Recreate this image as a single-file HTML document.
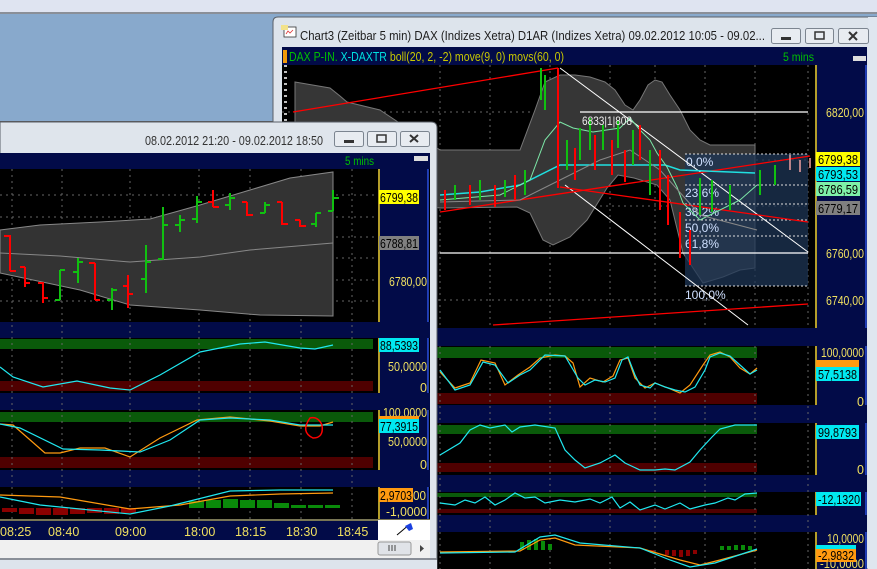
<!DOCTYPE html>
<html><head><meta charset="utf-8"><style>
html,body{margin:0;padding:0;width:877px;height:569px;overflow:hidden;background:#8aaacc}
svg{display:block}
text{font-family:"Liberation Sans",sans-serif}
</style></head><body>
<svg width="877" height="569" viewBox="0 0 877 569" xmlns="http://www.w3.org/2000/svg">
<rect x="0" y="0" width="877" height="13" fill="#dfe4f1"/>
<rect x="0" y="12" width="877" height="2" fill="#8a8f98"/>
<rect x="0" y="14" width="877" height="108" fill="#88a9cc"/>
<rect x="0" y="121" width="877" height="2" fill="#555"/>
<rect x="0" y="123" width="877" height="446" fill="#c3cfdd"/>

<!-- RIGHT WINDOW -->
<path d="M273,569 V22 Q273,17 278,17 H877 V569 Z" fill="#dde4ec" stroke="#5a6068" stroke-width="1"/>
<rect x="868" y="17" width="9" height="552" fill="#dfe6ef"/>
<rect x="284" y="27" width="12" height="10" fill="#fff" stroke="#333" stroke-width="0.8"/>
<path d="M281,25 L288,25 L288,30 L281,30Z" fill="#f2e28a"/>
<path d="M286,34 l2,-3 l2,2 l3,-3" stroke="#d33" fill="none" stroke-width="0.8"/>
<text x="300" y="40" font-size="12.5" fill="#1e1e1e" textLength="465" lengthAdjust="spacingAndGlyphs">Chart3 (Zeitbar 5 min)  DAX (Indizes Xetra) D1AR (Indizes Xetra) 09.02.2012 10:05 - 09.02...</text>
<g fill="#e8ecf1" stroke="#7c8590">
<rect x="771.5" y="28.5" width="29" height="15" rx="2"/>
<rect x="805.5" y="28.5" width="28" height="15" rx="2"/>
<rect x="838.5" y="28.5" width="30" height="15" rx="2"/>
</g>
<rect x="781" y="37" width="10" height="3" fill="#333"/>
<rect x="815" y="32" width="9" height="7" fill="none" stroke="#333" stroke-width="1.5"/>
<path d="M849,32 l8,8 M857,32 l-8,8" stroke="#333" stroke-width="2"/>

<rect x="282" y="47" width="585" height="522" fill="#000"/>
<rect x="282" y="47" width="585" height="18" fill="#020b48"/>
<rect x="283" y="50" width="4" height="13" fill="#f39a0a"/>
<text x="289" y="61" font-size="12.5" textLength="275" lengthAdjust="spacingAndGlyphs"><tspan fill="#00c000">DAX P-IN.</tspan><tspan fill="#00e0e0"> X-DAXTR</tspan><tspan fill="#c8c800"> boll(20, 2, -2) move(9, 0) movs(60, 0)</tspan></text>
<text x="783" y="61" font-size="12" fill="#00c000" textLength="31" lengthAdjust="spacingAndGlyphs">5 mins</text>
<rect x="853" y="56" width="13" height="5" fill="#ddd"/>
<rect x="282" y="328" width="585" height="18" fill="#020b48"/>
<rect x="282" y="405" width="585" height="18" fill="#020b48"/>
<rect x="282" y="475" width="585" height="17" fill="#020b48"/>
<rect x="282" y="515" width="585" height="17" fill="#020b48"/>
<rect x="282" y="347" width="475" height="11" fill="#0a5a0a"/>
<rect x="282" y="393" width="475" height="11" fill="#4f0000"/>
<rect x="282" y="425" width="475" height="9" fill="#0a5a0a"/>
<rect x="282" y="463" width="475" height="9" fill="#4f0000"/>
<rect x="282" y="493" width="475" height="4" fill="#0a5a0a"/>
<rect x="282" y="509" width="475" height="4" fill="#4f0000"/>
<g stroke="#666" stroke-dasharray="2,4" stroke-width="1">
<path d="M440,65V328 M490,65V328 M550,65V328 M610,65V328 M655,65V328 M705,65V328 M755,65V328 M808,65V328"/>
<path d="M282,112H808 M282,160H808 M282,206H808 M282,253H808 M282,300H808"/>
<path d="M440,346V569 M490,346V569 M550,346V569 M610,346V569 M655,346V569 M705,346V569 M755,346V569 M808,346V569"/>
</g>
<g stroke="#fff" stroke-width="1.5"><path d="M284,66h3M284,72h3M284,78h3M284,84h3M284,90h3M284,96h3M284,102h3M284,108h3M284,114h3M284,120h3"/></g>
<path d="M295,82 L330,88 L340,96 L347,102 L380,110 L440,150 L480,150 L520,150 L535,110 L545,82 L560,75 L575,75 L590,77 L605,82 L615,90 L625,105 L633,110 L640,100 L648,85 L655,80 L662,82 L670,95 L680,110 L690,130 L700,140 L710,145 L755,145 L755,268 L740,270 L723,277 L703,283 L683,253 L670,200 L657,185 L634,178 L618,175 L607,188 L587,220 L570,237 L553,245 L543,240 L530,213 L517,207 L440,208 L380,200 L295,200 Z" fill="#363636" stroke="#777" stroke-width="1"/>
<rect x="685" y="154" width="123" height="132" fill="#1d3556" fill-opacity="0.75"/>
<g stroke="#ddd" stroke-dasharray="2,2"><path d="M685,154H808 M685,185H808 M685,204H808 M685,220H808 M685,236H808 M685,286H808"/></g>
<g font-size="12" fill="#cfe0ff">
<text x="686" y="166">0,0%</text><text x="685" y="197">23,6%</text><text x="685" y="216">38,2%</text><text x="685" y="232">50,0%</text><text x="685" y="248">61,8%</text><text x="685" y="299">100,0%</text>
</g>
<path d="M580,112H808 M440,253H808" stroke="#fff" stroke-width="1.3"/>
<path d="M560,68 L808,252 M565,185 L748,325" stroke="#fff" stroke-width="1"/>
<g stroke="#f00" stroke-width="1.3" fill="none">
<path d="M293,112 L558,68"/>
<path d="M440,212 L810,156"/>
<path d="M560,187 L808,222"/>
<path d="M493,325 L808,304"/>
</g>
<path d="M440,195 L480,192 L520,185 L560,165 L665,165 L680,170 L755,173" stroke="#20e0e0" fill="none" stroke-width="1.5"/>
<path d="M440,200 L500,195 L530,180 L545,140 L560,122 L573,128 L593,132 L620,128 L630,118 L640,130 L650,140 L657,153 L667,167 L677,187 L683,203 L700,220 L740,200 L757,185" stroke="#7de8a8" fill="none" stroke-width="1"/>
<path d="M440,202 L520,200 L560,180 L600,160 L630,150 L660,170 L700,215 L757,230" stroke="#888" fill="none" stroke-width="1"/>
<g stroke-width="2" fill="none">
<g stroke="#10c010">
<path d="M541,68V100 M545,75V110 M567,140V170 M580,128V160 M590,118V150 M603,125V150 M618,120V148 M633,130V165 M650,150V195 M700,178V215 M712,180V212 M730,185V210 M760,170V195 M775,165V185 M455,185V200 M480,180V200 M505,180V197 M525,170V195"/>
</g>
<g stroke="#f00">
<path d="M558,68V188 M575,148V180 M595,135V170 M612,140V175 M625,150V182 M640,125V160 M660,150V210 M668,175V225 M680,212V258 M690,230V265 M445,190V210 M470,185V205 M495,185V207 M515,175V200"/>
</g>
<g stroke="#f0a0a0" stroke-width="1.5"><path d="M790,155V170 M800,160V172 M810,158V168"/></g>
</g>
<text x="582" y="125" font-size="12" fill="#eee" textLength="50" lengthAdjust="spacingAndGlyphs">6833|1|808</text>
<path d="M440,372 L455,388 L470,383 L481,360 L495,363 L505,385 L518,375 L530,367 L540,358 L555,355 L565,356 L573,363 L580,387 L590,378 L603,382 L613,376 L620,360 L628,358 L635,378 L645,388 L655,383 L668,388 L680,393 L690,385 L703,365 L710,355 L720,352 L730,357 L740,368 L750,374 L757,368" stroke="#ff9a10" fill="none" stroke-width="1.2"/>
<path d="M440,370 L455,390 L470,385 L483,362 L495,365 L508,383 L520,375 L530,370 L540,360 L545,355 L565,356 L578,378 L585,385 L595,380 L605,382 L615,378 L622,360 L628,357 L635,375 L640,385 L650,388 L655,383 L665,387 L675,390 L685,392 L695,387 L705,370 L710,357 L720,353 L730,356 L740,365 L750,374 L757,370" stroke="#20e8f0" fill="none" stroke-width="1.2"/>
<path d="M440,455 L460,443 L470,430 L480,425 L490,428 L505,425 L512,432 L520,427 L535,425 L555,428 L565,450 L575,460 L585,468 L600,463 L615,455 L625,463 L640,470 L655,470 L665,469 L675,470 L690,462 L700,450 L712,437 L720,429 L735,425 L757,425" stroke="#20e8f0" fill="none" stroke-width="1.2"/>
<path d="M440,503 L455,505 L465,500 L475,503 L485,497 L495,505 L505,500 L515,493 L525,498 L535,497 L545,503 L560,500 L575,502 L590,499 L600,503 L612,497 L620,508 L630,502 L640,510 L655,505 L665,509 L680,503 L690,509 L705,505 L715,503 L728,498 L735,500 L745,494 L757,493" stroke="#20e8f0" fill="none" stroke-width="1.2"/>
<g fill="#0a8a0a"><rect x="520" y="542" width="4" height="8"/><rect x="527" y="540" width="4" height="10"/><rect x="534" y="539" width="4" height="11"/><rect x="541" y="541" width="4" height="9"/><rect x="548" y="544" width="4" height="6"/><rect x="720" y="546" width="4" height="4"/><rect x="727" y="546" width="4" height="4"/><rect x="734" y="545" width="4" height="5"/><rect x="741" y="545" width="4" height="5"/><rect x="748" y="546" width="4" height="4"/></g>
<g fill="#8a0000"><rect x="650" y="550" width="4" height="3"/><rect x="665" y="550" width="4" height="5"/><rect x="672" y="550" width="4" height="6"/><rect x="679" y="550" width="4" height="7"/><rect x="686" y="550" width="4" height="6"/><rect x="693" y="550" width="4" height="4"/></g>
<path d="M440,552 L520,551 L540,540 L555,538 L575,545 L640,548 L680,560 L700,565 L720,560 L757,550" stroke="#ff9a10" fill="none" stroke-width="1.2"/>
<path d="M440,553 L515,552 L540,537 L555,535 L580,543 L640,548 L670,560 L690,567 L715,563 L757,549" stroke="#20e8f0" fill="none" stroke-width="1.2"/>

<rect x="815" y="65" width="51" height="263" fill="#020b48"/>
<rect x="815" y="346" width="51" height="59" fill="#020b48"/>
<rect x="815" y="423" width="51" height="52" fill="#020b48"/>
<rect x="815" y="492" width="51" height="23" fill="#020b48"/>
<rect x="815" y="532" width="51" height="37" fill="#020b48"/>
<g stroke="#f0d020" stroke-width="1.5"><path d="M816,65V328 M816,346V405 M816,423V475 M816,492V515 M816,532V569"/></g>
<g stroke="#2a50e0" stroke-width="1.5"><path d="M866,65V328 M866,346V405 M866,423V475 M866,492V515 M866,532V569"/></g>
<g font-size="12.5" fill="#f0e060" lengthAdjust="spacingAndGlyphs">
<text x="826" y="117" textLength="38" lengthAdjust="spacingAndGlyphs">6820,00</text>
<text x="826" y="258" textLength="38" lengthAdjust="spacingAndGlyphs">6760,00</text>
<text x="826" y="305" textLength="38" lengthAdjust="spacingAndGlyphs">6740,00</text>
<text x="821" y="357" textLength="43" lengthAdjust="spacingAndGlyphs">100,0000</text>
<text x="857" y="406">0</text><text x="857" y="474">0</text>
<text x="827" y="543" textLength="37" lengthAdjust="spacingAndGlyphs">10,0000</text>
<text x="820" y="568" textLength="44" lengthAdjust="spacingAndGlyphs">-10,0000</text>
</g>
<rect x="816" y="152" width="44" height="14" fill="#ffff00"/><text x="818" y="164" font-size="12.5" fill="#000" textLength="40" lengthAdjust="spacingAndGlyphs">6799,38</text>
<rect x="816" y="167" width="44" height="14" fill="#00e8f0"/><text x="818" y="179" font-size="12.5" fill="#000" textLength="40" lengthAdjust="spacingAndGlyphs">6793,53</text>
<rect x="816" y="182" width="44" height="14" fill="#7ef0a8"/><text x="818" y="194" font-size="12.5" fill="#000" textLength="40" lengthAdjust="spacingAndGlyphs">6786,59</text>
<rect x="816" y="201" width="44" height="14" fill="#808080"/><text x="818" y="213" font-size="12.5" fill="#000" textLength="40" lengthAdjust="spacingAndGlyphs">6779,17</text>
<rect x="816" y="360" width="43" height="8" fill="#ff9a10"/>
<rect x="816" y="367" width="43" height="14" fill="#00e8f0"/><text x="818" y="379" font-size="12.5" fill="#000" textLength="39" lengthAdjust="spacingAndGlyphs">57,5138</text>
<rect x="816" y="425" width="43" height="14" fill="#00e8f0"/><text x="818" y="437" font-size="12.5" fill="#000" textLength="39" lengthAdjust="spacingAndGlyphs">99,8793</text>
<rect x="816" y="492" width="45" height="14" fill="#00e8f0"/><text x="818" y="504" font-size="12.5" fill="#000" textLength="42" lengthAdjust="spacingAndGlyphs">-12,1320</text>
<rect x="816" y="545" width="40" height="6" fill="#00e8f0"/>
<rect x="816" y="549" width="40" height="13" fill="#ff9a10"/><text x="818" y="560" font-size="12.5" fill="#000" textLength="36" lengthAdjust="spacingAndGlyphs">-2,9832</text>

<!-- LEFT WINDOW -->
<path d="M0,122 H431 Q437,122 437,128 V569 H0 Z" fill="#dfe5ec" stroke="#5a6068"/>
<text x="145" y="145" font-size="12.5" fill="#333" textLength="178" lengthAdjust="spacingAndGlyphs">08.02.2012 21:20 - 09.02.2012 18:50</text>
<g fill="#e8ecf1" stroke="#7c8590">
<rect x="334.5" y="131.5" width="29" height="15" rx="2"/>
<rect x="367.5" y="131.5" width="29" height="15" rx="2"/>
<rect x="400.5" y="131.5" width="29" height="15" rx="2"/>
</g>
<rect x="344" y="140" width="10" height="3" fill="#333"/>
<rect x="377" y="135" width="9" height="7" fill="none" stroke="#333" stroke-width="1.5"/>
<path d="M410,135 l8,7 M418,135 l-8,7" stroke="#333" stroke-width="2"/>
<rect x="0" y="153" width="430" height="387" fill="#000"/>
<rect x="0" y="153" width="430" height="16" fill="#020b48"/>
<text x="345" y="165" font-size="12" fill="#00c000" textLength="29" lengthAdjust="spacingAndGlyphs">5 mins</text>
<rect x="414" y="156" width="14" height="5" fill="#ddd"/>
<rect x="0" y="322" width="430" height="16" fill="#020b48"/>
<rect x="0" y="393" width="430" height="17" fill="#020b48"/>
<rect x="0" y="470" width="430" height="17" fill="#020b48"/>
<rect x="0" y="519" width="430" height="21" fill="#020b48"/>
<path d="M0,520H430" stroke="#f0e060"/>
<rect x="0" y="339" width="373" height="10" fill="#0a5a0a"/>
<rect x="0" y="381" width="373" height="10" fill="#4f0000"/>
<rect x="0" y="412" width="373" height="10" fill="#0a5a0a"/>
<rect x="0" y="457" width="373" height="11" fill="#4f0000"/>
<g stroke="#666" stroke-dasharray="2,4">
<path d="M12,169V519 M62,169V519 M130,169V519 M199,169V519 M250,169V519 M301,169V519 M352,169V519"/>
<path d="M0,195H378 M0,217H378 M0,237H378 M0,258H378 M0,280H378 M0,301H378"/>
</g>
<path d="M0,230 L40,225 L100,222 L150,219 L200,205 L250,190 L290,178 L333,172 L333,316 L260,315 L200,310 L130,305 L80,290 L0,273 Z" fill="#333" stroke="#888"/>
<path d="M0,253 L60,256 L130,262 L200,257 L250,250 L333,243" stroke="#888" fill="none"/>
<g stroke-width="2" fill="none">
<g stroke="#f00">
<path d="M10,235V271 M4,236h6 M10,271h6"/>
<path d="M25,267V287 M20,267h5 M25,283h5"/>
<path d="M43,282V303 M38,283h5 M43,298h5"/>
<path d="M95,263V300 M89,263h6 M95,300h5"/>
<path d="M128,275V308 M123,286h5 M128,294h5"/>
<path d="M213,190V207 M208,202h5 M213,207h6"/>
<path d="M247,202V216 M242,202h5 M247,215h6"/>
<path d="M282,202V225 M277,202h5 M282,224h6"/>
<path d="M300,220V227 M295,220h5 M300,226h6"/>
</g>
<g stroke="#10c010">
<path d="M60,270V300 M55,300h5 M60,270h5"/>
<path d="M78,258V283 M73,272h5 M78,262h5"/>
<path d="M112,288V310 M107,300h5 M112,290h5"/>
<path d="M146,245V293 M141,279h5 M146,262h5"/>
<path d="M163,207V260 M158,259h5 M163,225h5"/>
<path d="M180,215V232 M175,225h5 M180,220h5"/>
<path d="M197,196V223 M192,219h5 M197,202h5"/>
<path d="M230,193V210 M225,205h5 M230,198h5"/>
<path d="M265,202V213 M260,213h5 M265,205h5"/>
<path d="M316,213V227 M311,224h5 M316,213h5"/>
<path d="M333,190V211 M328,211h5 M333,198h6"/>
</g>
</g>
<path d="M0,367 L13,377 L43,387 L77,381 L110,388 L130,390 L160,375 L200,352 L240,344 L265,342 L300,348 L315,349 L333,345" stroke="#20e8f0" fill="none" stroke-width="1.2"/>
<path d="M0,424 L13,425 L45,453 L60,453 L80,448 L105,448 L130,457 L160,438 L197,420 L230,417 L270,421 L300,426 L320,426 L333,422" stroke="#ff9a10" fill="none" stroke-width="1.2"/>
<path d="M0,424 L20,428 L63,449 L100,450 L140,452 L170,440 L200,420 L230,418 L270,420 L300,425 L333,425" stroke="#20e8f0" fill="none" stroke-width="1.2"/>
<path d="M310,418 Q300,432 313,438 Q324,438 322,425 Q318,416 310,418Z" stroke="#f00" fill="none" stroke-width="1.5"/>
<g fill="#8a0000"><rect x="2" y="508" width="15" height="4"/><rect x="19" y="508" width="15" height="6"/><rect x="36" y="508" width="15" height="7"/><rect x="53" y="508" width="15" height="7"/><rect x="70" y="508" width="15" height="6"/><rect x="87" y="508" width="15" height="5"/><rect x="104" y="508" width="15" height="6"/><rect x="121" y="508" width="15" height="5"/></g>
<g fill="#0a8a0a"><rect x="189" y="501" width="15" height="7"/><rect x="206" y="500" width="15" height="8"/><rect x="223" y="499" width="15" height="9"/><rect x="240" y="500" width="15" height="8"/><rect x="257" y="500" width="15" height="8"/><rect x="274" y="503" width="15" height="5"/><rect x="291" y="505" width="15" height="3"/><rect x="308" y="505" width="15" height="3"/><rect x="325" y="505" width="15" height="3"/></g>
<path d="M0,495 L60,497 L130,509 L180,505 L230,496 L280,494 L333,493" stroke="#ff9a10" fill="none" stroke-width="1.2"/>
<path d="M0,497 L40,505 L130,514 L170,506 L230,491 L280,490 L333,490" stroke="#20e8f0" fill="none" stroke-width="1.2"/>
<g font-size="12.5" fill="#f0e060">
<text x="0" y="536">08:25</text><text x="48" y="536">08:40</text><text x="115" y="536">09:00</text><text x="184" y="536">18:00</text><text x="235" y="536">18:15</text><text x="286" y="536">18:30</text><text x="337" y="536">18:45</text>
</g>
<rect x="378" y="169" width="50" height="153" fill="#020b48"/>
<rect x="378" y="338" width="50" height="55" fill="#020b48"/>
<rect x="378" y="410" width="50" height="60" fill="#020b48"/>
<rect x="378" y="487" width="50" height="32" fill="#020b48"/>
<g stroke="#f0d020" stroke-width="1.5"><path d="M379,169V322 M379,338V393 M379,410V470 M379,487V519"/></g>
<g stroke="#2a50e0" stroke-width="1.5"><path d="M428,169V322 M428,338V393 M428,410V470 M428,487V519"/></g>
<g font-size="12.5" fill="#f0e060">
<text x="389" y="286" textLength="38" lengthAdjust="spacingAndGlyphs">6780,00</text>
<text x="388" y="371" textLength="39" lengthAdjust="spacingAndGlyphs">50,0000</text>
<text x="420" y="392">0</text>
<text x="388" y="446" textLength="39" lengthAdjust="spacingAndGlyphs">50,0000</text>
<text x="420" y="469">0</text>
<text x="383" y="417" textLength="44" lengthAdjust="spacingAndGlyphs">100,0000</text>
<text x="386" y="516" textLength="41" lengthAdjust="spacingAndGlyphs">-1,0000</text>
</g>
<rect x="379" y="190" width="40" height="14" fill="#ffff00"/><text x="380" y="202" font-size="12.5" fill="#000" textLength="38" lengthAdjust="spacingAndGlyphs">6799,38</text>
<rect x="379" y="236" width="40" height="14" fill="#808080"/><text x="380" y="248" font-size="12.5" fill="#000" textLength="38" lengthAdjust="spacingAndGlyphs">6788,81</text>
<rect x="379" y="338" width="40" height="14" fill="#00e8f0"/><text x="380" y="350" font-size="12.5" fill="#000" textLength="38" lengthAdjust="spacingAndGlyphs">88,5393</text>
<rect x="379" y="416" width="40" height="4" fill="#ff9a10"/>
<rect x="379" y="419" width="40" height="14" fill="#00e8f0"/><text x="380" y="431" font-size="12.5" fill="#000" textLength="38" lengthAdjust="spacingAndGlyphs">77,3915</text>
<rect x="379" y="488" width="34" height="14" fill="#ff9a10"/><text x="380" y="500" font-size="12.5" fill="#000" textLength="32" lengthAdjust="spacingAndGlyphs">2,9703</text>
<text x="413" y="500" font-size="12.5" fill="#f0e060" textLength="13" lengthAdjust="spacingAndGlyphs">00</text>
<rect x="378" y="520" width="52" height="20" fill="#fff"/>
<path d="M397,535 L410,524" stroke="#000"/><path d="M405,526 l6,-3 l2,6 l-4,2z" fill="#1a40e0"/>
<rect x="0" y="540" width="430" height="18" fill="#f0f0f0"/>
<rect x="378" y="542" width="33" height="13" rx="2" fill="#e0e3e8" stroke="#999"/>
<path d="M389,545v6M392,545v6M395,545v6" stroke="#444"/>
<path d="M420,545 l4,3.5 l-4,3.5z" fill="#444"/>
<rect x="0" y="558" width="437" height="2" fill="#8a8f98"/>
<rect x="0" y="560" width="437" height="9" fill="#dde4ec"/>
</svg>
</body></html>
